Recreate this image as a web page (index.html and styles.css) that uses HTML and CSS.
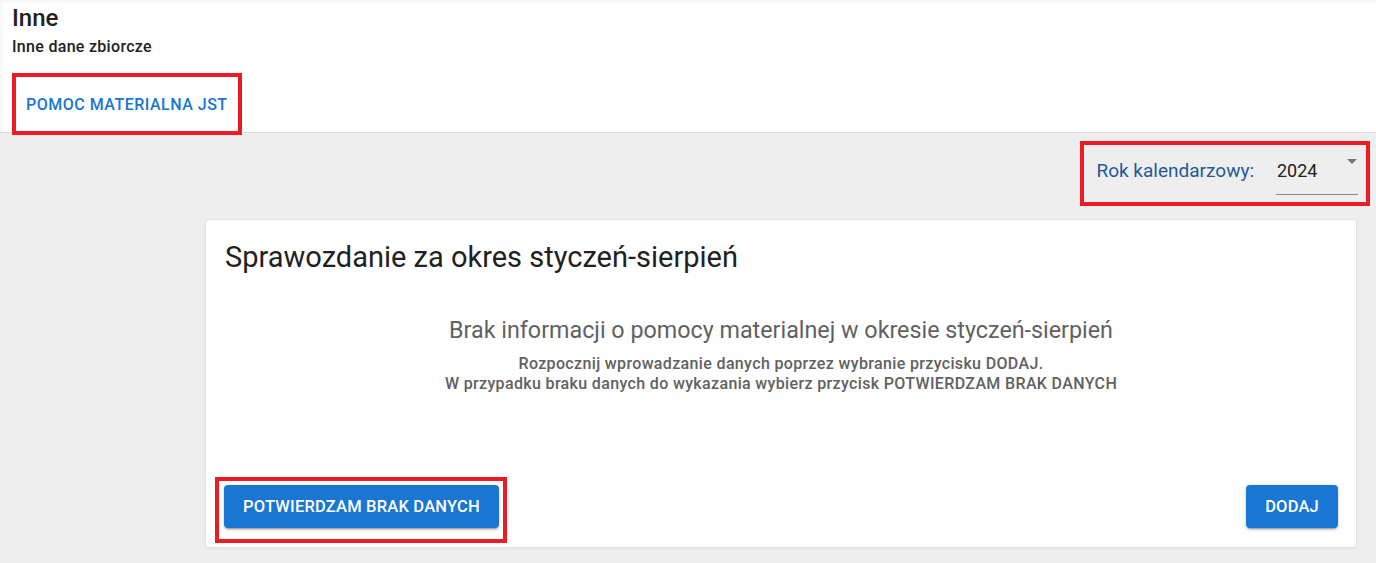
FILE: index.html
```html
<!DOCTYPE html>
<html lang="pl">
<head>
  <meta charset="UTF-8">
  <title>Inne - Inne dane zbiorcze</title>
  <link rel="stylesheet" href="styles.css">
</head>
<body>
  <header class="page-header">
    <h1 class="page-title">Inne</h1>
    <div class="page-subtitle">Inne dane zbiorcze</div>
    <nav class="tabs">
      <button class="tab tab-active mark">POMOC MATERIALNA JST</button>
    </nav>
  </header>

  <main class="content">
    <div class="toolbar">
      <div class="year-filter mark">
        <span class="year-label">Rok kalendarzowy:</span>
        <div class="year-select">
          <span class="year-value">2024</span>
          <span class="year-arrow"></span>
        </div>
      </div>
    </div>

    <section class="card">
      <h2 class="card-title">Sprawozdanie za okres styczeń-sierpień</h2>

      <div class="empty">
        <div class="empty-title">Brak informacji o pomocy materialnej w okresie styczeń-sierpień</div>
        <div class="empty-text">Rozpocznij wprowadzanie danych poprzez wybranie przycisku DODAJ.</div>
        <div class="empty-text">W przypadku braku danych do wykazania wybierz przycisk POTWIERDZAM BRAK DANYCH</div>
      </div>

      <div class="card-actions">
        <div class="mark mark-btn">
          <button class="btn">POTWIERDZAM BRAK DANYCH</button>
        </div>
        <button class="btn">DODAJ</button>
      </div>
    </section>
  </main>
</body>
</html>
```

FILE: styles.css
```css
body {
  margin: 0;
  font-family: Roboto, "Liberation Sans", Arial, sans-serif;
  background-color: #eeeeee;
  color: #212121;
}
.page-header {
  background-color: #fff;
  padding: 4px 0 0 12px;
  border-bottom: 1px solid #dcdcdc;
  box-shadow: inset 2px 2px 3px rgba(0,0,0,0.04);
}
.page-title {
  margin: 0;
  font-size: 24px;
  font-weight: 500;
  line-height: 28px;
}
.page-subtitle {
  margin-top: 5px;
  font-size: 16px;
  font-weight: 500;
  letter-spacing: 0.3px;
  line-height: 20px;
}
.tabs {
  display: flex;
  margin-top: 20px;
}
.tab {
  height: 55px;
  margin-left: 4px;
  padding: 0 10px;
  border: none;
  background: none;
  font-family: inherit;
  font-size: 16px;
  font-weight: 500;
  color: #1976d2;
  letter-spacing: 0.5px;
  cursor: pointer;
}
.mark {
  position: relative;
}
.mark::after {
  content: "";
  position: absolute;
  top: -4px;
  right: -4px;
  bottom: -4px;
  left: -4px;
  border: 4px solid #ed1c24;
  pointer-events: none;
}
.tab.mark::after {
  bottom: -3px;
}
.content {
  padding: 12px 19px 15px 205px;
}
.toolbar {
  display: flex;
  justify-content: flex-end;
  margin-right: -9px;
}
.year-filter {
  display: flex;
  align-items: center;
  height: 57px;
  padding: 0 8px 0 12px;
}
.year-label {
  font-size: 19px;
  color: #1f5a96;
  margin-right: 22px;
  margin-bottom: 6px;
}
.year-select {
  position: relative;
  width: 82px;
  height: 36px;
  margin-top: 6px;
  border-bottom: 1px solid #8a8a8a;
  box-sizing: border-box;
}
.year-value {
  display: block;
  font-size: 18px;
  line-height: 26px;
  padding-left: 1px;
  margin-top: -1px;
}
.year-arrow {
  position: absolute;
  right: 1px;
  top: 0;
  border-left: 5px solid transparent;
  border-right: 5px solid transparent;
  border-top: 5px solid #757575;
}
.card {
  margin-top: 17px;
  background-color: #fff;
  border-radius: 4px;
  border: 1px solid #e2e2e2;
  box-shadow: 0 1px 2px rgba(0,0,0,0.04);
  padding: 19px 18px;
}
.card-title {
  margin: 0 0 0 1px;
  font-size: 29px;
  font-weight: 400;
  line-height: 36px;
}
.empty {
  text-align: center;
  color: #616161;
  margin-top: 40px;
}
.empty-title {
  font-size: 23.3px;
  line-height: 30px;
  margin-bottom: 9px;
}
.empty-text {
  font-size: 16px;
  font-weight: 500;
  letter-spacing: 0.35px;
  line-height: 20px;
}
.card-actions {
  display: flex;
  justify-content: space-between;
  align-items: flex-start;
  margin-top: 91px;
}
.mark-btn::after {
  top: -8px;
  right: -8px;
  bottom: -15px;
  left: -9px;
}
.btn {
  display: block;
  height: 43px;
  padding: 0 19px;
  border: none;
  border-radius: 4px;
  background-color: #1976d2;
  color: #fff;
  font-family: inherit;
  font-size: 16.5px;
  font-weight: 500;
  letter-spacing: 0.2px;
  box-shadow: 0 3px 1px -2px rgba(0,0,0,0.2), 0 2px 2px 0 rgba(0,0,0,0.14), 0 1px 5px 0 rgba(0,0,0,0.12);
  cursor: pointer;
}
```
